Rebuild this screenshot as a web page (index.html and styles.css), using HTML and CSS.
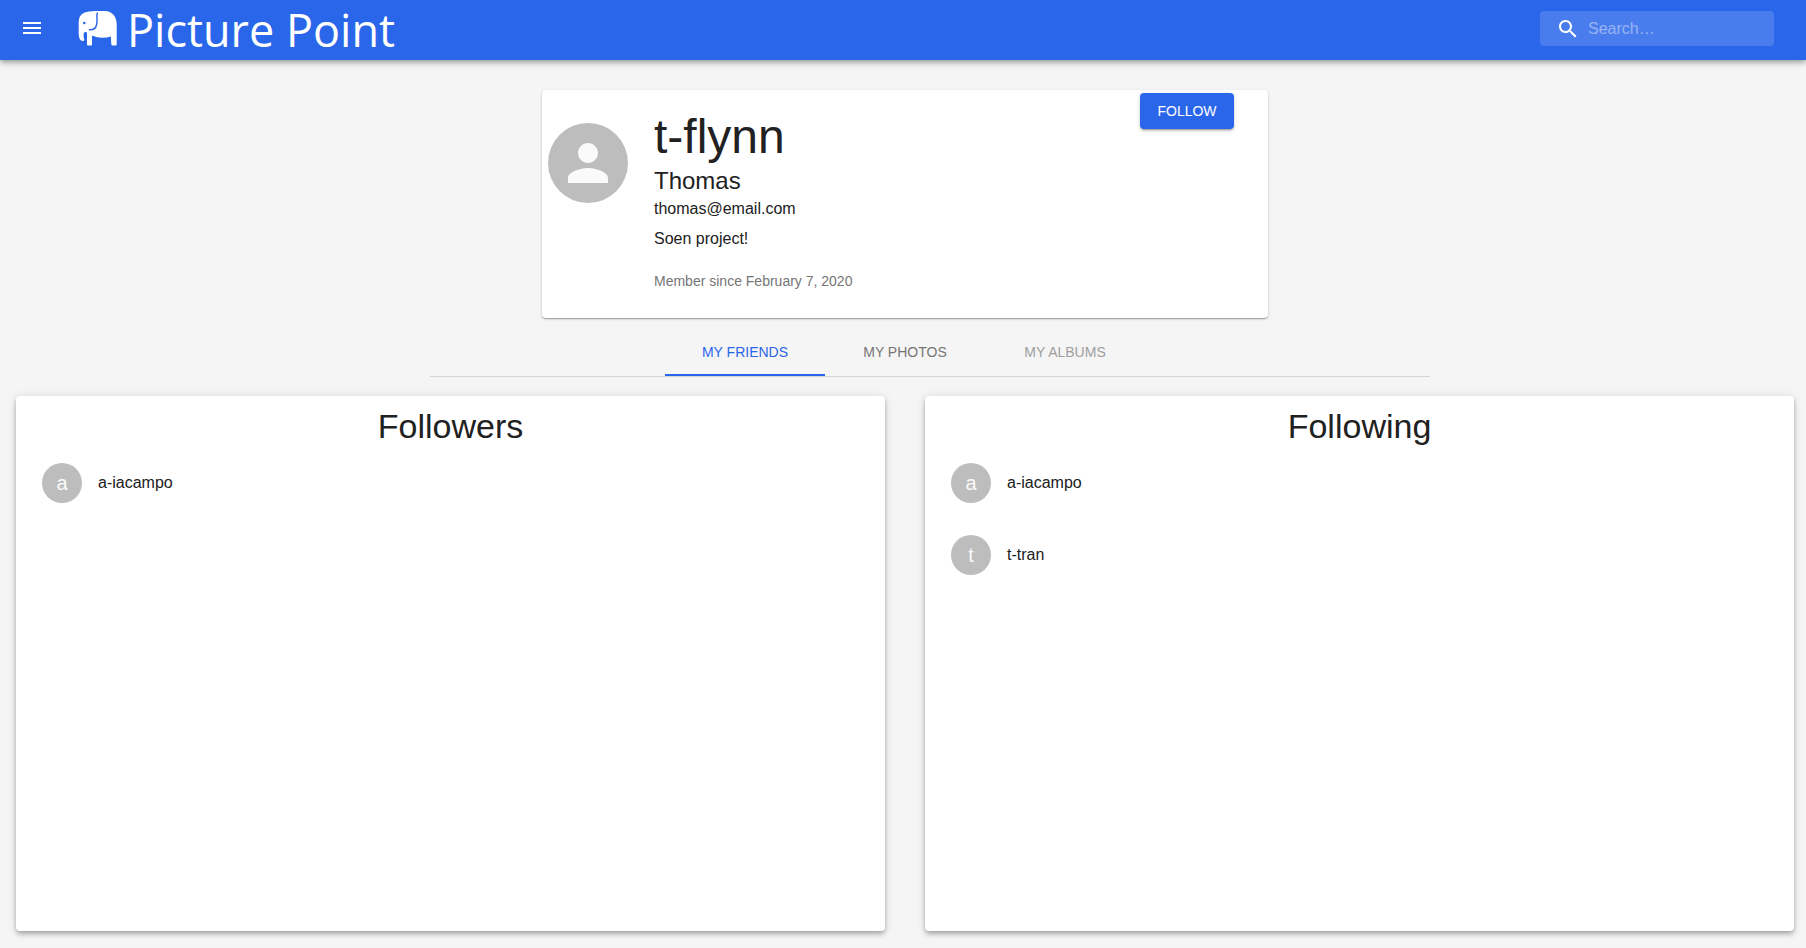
FILE: index.html
```html
<!DOCTYPE html>
<html lang="en">
<head>
<meta charset="utf-8">
<title>Picture Point</title>
<link rel="stylesheet" href="styles.css">
</head>
<body>
<header class="app-bar">
  <button class="menu-button" type="button" aria-label="Open menu">
    <svg class="icon" viewBox="0 0 24 24" aria-hidden="true"><path d="M3 18h18v-2H3v2zm0-5h18v-2H3v2zm0-7v2h18V6H3z"/></svg>
  </button>
  <a class="brand" href="#">
    <svg class="brand-logo" viewBox="0 0 39 35" aria-hidden="true">
      <path fill="#fff" d="M11 .5Q14 0 18 0H27C34 .5 38.500 5 38.700 13V33Q38.700 34.500 37.500 34.500H34.500Q33.500 34.500 33.300 33L32.800 25.500Q23 28.500 14 24.500V33.500Q14 34.500 13 34.500H10Q9 34.500 9 33.500V21.500Q6 20 5.600 23Q5.300 26 6.300 28.500Q6.300 30 5 30C2 30 .8 27 .7 22V10Q1 1.500 11 .5Z"/>
      <path fill="none" stroke="#2a66e9" stroke-width="1.400" stroke-linecap="round" d="M19.300 2C18 5 20 9 18.500 14Q17.500 19 11.500 18.700"/>
      <circle cx="6.300" cy="12" r="1.300" fill="#2a66e9"/>
    </svg>
    <span>Picture Point</span>
  </a>
  <form class="search" role="search">
    <label for="search" aria-label="Search"><svg class="icon" viewBox="0 0 24 24" aria-hidden="true"><path d="M15.500 14h-.79l-.28-.27C15.410 12.590 16 11.110 16 9.500 16 5.910 13.090 3 9.500 3S3 5.910 3 9.500 5.910 16 9.500 16c1.610 0 3.090-.59 4.230-1.570l.27.28v.79l5 4.990L20.490 19l-4.990-5zm-6 0C7.010 14 5 11.990 5 9.500S7.010 5 9.500 5 14 7.010 14 9.500 11.990 14 9.500 14z"/></svg></label>
    <input id="search" class="search-input" type="text" placeholder="Search…">
  </form>
</header>
<main class="page">
  <section class="profile">
    <div class="avatar avatar-large">
      <svg viewBox="0 0 24 24" aria-hidden="true"><path d="M12 12c2.210 0 4-1.790 4-4s-1.790-4-4-4-4 1.790-4 4 1.790 4 4 4zm0 2c-2.670 0-8 1.340-8 4v2h16v-2c0-2.660-5.330-4-8-4z"/></svg>
    </div>
    <div class="profile-info">
      <h1 class="username">t-flynn</h1>
      <h2 class="full-name">Thomas</h2>
      <p class="email">thomas@email.com</p>
      <p class="bio">Soen project!</p>
      <p class="since">Member since February 7, 2020</p>
    </div>
    <button class="follow" type="button">Follow</button>
  </section>
  <div class="tab-area">
    <nav class="tabs" role="tablist">
      <button class="tab tab-active" type="button" role="tab" aria-selected="true">My Friends</button>
      <button class="tab" type="button" role="tab" aria-selected="false">My Photos</button>
      <button class="tab tab-disabled" type="button" role="tab" aria-selected="false" disabled>My Albums</button>
    </nav>
    <hr class="divider">
  </div>
  <div class="lists">
    <section class="people">
      <h2 class="people-title">Followers</h2>
      <ul class="people-list">
        <li class="person"><span class="avatar">a</span><span>a-iacampo</span></li>
      </ul>
    </section>
    <section class="people">
      <h2 class="people-title">Following</h2>
      <ul class="people-list">
        <li class="person"><span class="avatar">a</span><span>a-iacampo</span></li>
        <li class="person"><span class="avatar">t</span><span>t-tran</span></li>
      </ul>
    </section>
  </div>
</main>
</body>
</html>
```
FILE: styles.css
```css
* {
  box-sizing: border-box;
}

body {
  min-height: 100vh;
  margin: 0;
  display: flex;
  flex-direction: column;
  background: #f5f5f5;
  color: #212121;
  font: 16px/24px "Liberation Sans", Arial, sans-serif;
}

h1, h2, p, ul {
  margin: 0;
  padding: 0;
  font-weight: 400;
}

button {
  border: 0;
  padding: 0;
  background: none;
  font: inherit;
  cursor: pointer;
}

.icon {
  display: block;
  width: 24px;
  height: 24px;
  fill: #fff;
}

.app-bar {
  position: relative;
  display: flex;
  align-items: center;
  height: 60px;
  padding: 0 32px 0 8px;
  background: #2a66e9;
  color: #fff;
  box-shadow: 0 2px 4px -1px rgba(0, 0, 0, .2), 0 4px 5px 0 rgba(0, 0, 0, .14), 0 1px 10px 0 rgba(0, 0, 0, .12);
}

.menu-button {
  padding: 12px;
  margin-bottom: 4px;
}

.brand {
  display: flex;
  align-items: center;
  gap: 10px;
  margin-left: 22px;
  color: inherit;
  font: 45px/62px "Open Sans", "Noto Sans", sans-serif;
  text-decoration: none;
}

.brand-logo {
  width: 39px;
  height: 35px;
  margin-bottom: 3px;
}

.search {
  display: flex;
  align-items: center;
  width: 234px;
  height: 35px;
  margin: 0 0 3px auto;
  padding-left: 16px;
  gap: 8px;
  border-radius: 4px;
  background: rgba(255, 255, 255, .15);
}

.search-input {
  flex: 1;
  min-width: 0;
  padding: 0;
  border: 0;
  outline: 0;
  background: none;
  color: #fff;
  font: inherit;
}

.search-input::placeholder {
  color: #fff;
  opacity: .42;
}

.page {
  flex: 1;
  display: flex;
  flex-direction: column;
  padding: 30px 12px 17px 16px;
}

.profile {
  align-self: center;
  display: flex;
  align-items: flex-start;
  width: 726px;
  max-width: 100%;
  min-height: 228px;
  padding-left: 6px;
  border-radius: 4px;
  background: #fff;
  box-shadow: 0 1px 3px 0 rgba(0, 0, 0, .2), 0 1px 1px 0 rgba(0, 0, 0, .14), 0 2px 1px -1px rgba(0, 0, 0, .12);
}

.avatar {
  display: flex;
  align-items: center;
  justify-content: center;
  flex: none;
  width: 40px;
  height: 40px;
  border-radius: 50%;
  background: #bdbdbd;
  color: #fafafa;
  font-size: 20px;
}

.avatar-large {
  width: 80px;
  height: 80px;
  margin-top: 33px;
}

.avatar-large svg {
  width: 60px;
  height: 60px;
  fill: #fafafa;
}

.profile-info {
  padding: 21px 0 0 26px;
}

.username {
  font-size: 48px;
  line-height: 52px;
}

.full-name {
  font-size: 24px;
  line-height: 36px;
}

.email {
  line-height: 20px;
}

.bio {
  margin-top: 8px;
}

.since {
  margin-top: 20px;
  color: #757575;
  font-size: 14px;
  line-height: 20px;
}

.follow {
  min-width: 94px;
  height: 36px;
  margin: 3px 34px 0 auto;
  padding: 0 16px;
  border-radius: 4px;
  background: #2a66e9;
  color: #fff;
  font-size: 14px;
  text-transform: uppercase;
  box-shadow: 0 3px 1px -2px rgba(0, 0, 0, .2), 0 2px 2px 0 rgba(0, 0, 0, .14), 0 1px 5px 0 rgba(0, 0, 0, .12);
}

.tab-area {
  align-self: center;
  width: 950px;
  max-width: 100%;
  margin-top: 10px;
}

.tabs {
  display: flex;
  justify-content: center;
}

.tab {
  width: 160px;
  height: 48px;
  border: solid transparent;
  border-width: 2px 0;
  color: #757575;
  font-size: 14px;
  text-transform: uppercase;
}

.tab-active {
  border-bottom-color: #2a66e9;
  color: #2a66e9;
}

.tab-disabled {
  color: #9e9e9e;
}

.divider {
  width: 1000px;
  height: 1px;
  margin: 0;
  border: 0;
  background: #d6d6d6;
}

.lists {
  flex: 1;
  display: grid;
  grid-template-columns: 1fr 1fr;
  gap: 40px;
  margin-top: 19px;
}

.people {
  padding: 9px 10px;
  border-radius: 4px;
  background: #fff;
  box-shadow: 0 2px 4px -1px rgba(0, 0, 0, .2), 0 4px 5px 0 rgba(0, 0, 0, .14), 0 1px 10px 0 rgba(0, 0, 0, .12);
}

.people-title {
  font-size: 34px;
  line-height: 42px;
  text-align: center;
}

.people-list {
  list-style: none;
}

.person {
  display: flex;
  align-items: center;
  gap: 16px;
  height: 72px;
  padding: 0 16px;
}
```
